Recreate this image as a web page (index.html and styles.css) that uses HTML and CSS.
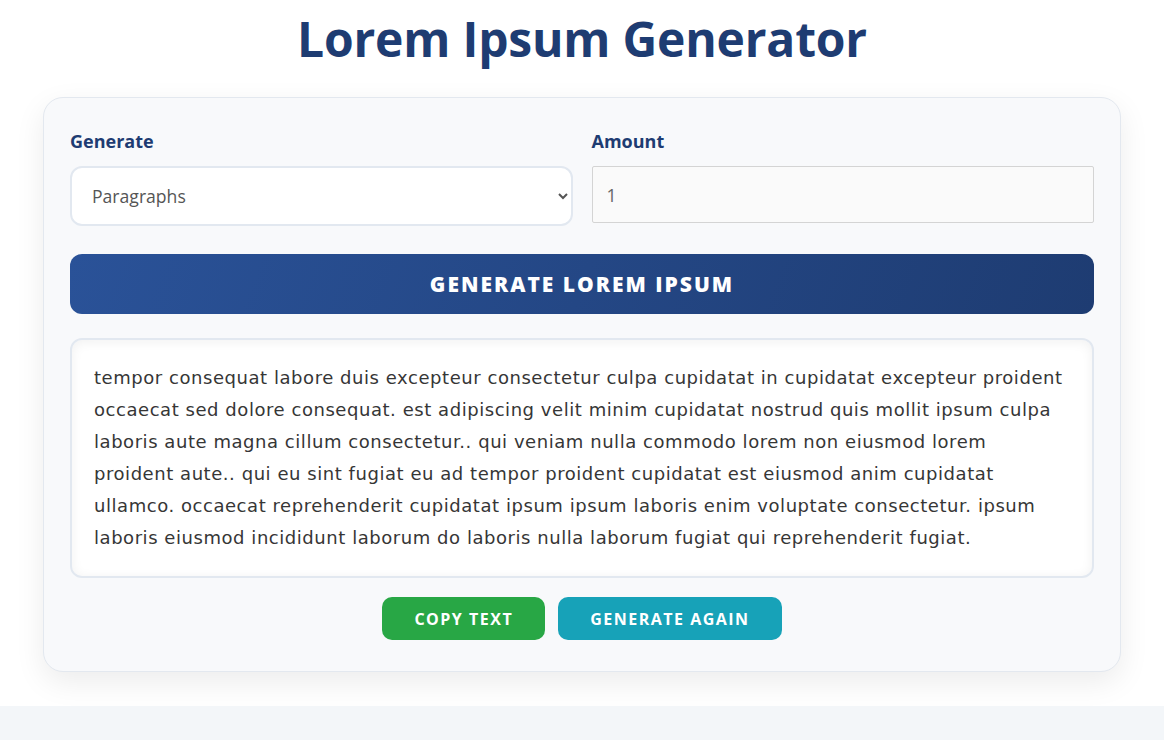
FILE: index.html
```html
<!DOCTYPE html>
<html lang="en">
<head>
<meta charset="utf-8">
<title>Lorem Ipsum Generator</title>
<link rel="stylesheet" href="styles.css">
</head>
<body>
<div class="page">
  <h1 class="title">Lorem Ipsum Generator</h1>
  <main class="card">
    <div class="fields">
      <div class="field">
        <label class="label" for="type">Generate</label>
        <select id="type" class="select">
          <option>Paragraphs</option>
          <option>Sentences</option>
          <option>Words</option>
        </select>
      </div>
      <div class="field">
        <label class="label" for="amount">Amount</label>
        <input id="amount" class="input" type="number" value="1">
      </div>
    </div>
    <button class="btn-main">Generate Lorem Ipsum</button>
    <div class="output">tempor consequat labore duis excepteur consectetur culpa cupidatat in cupidatat excepteur proident occaecat sed dolore consequat. est adipiscing velit minim cupidatat nostrud quis mollit ipsum culpa laboris aute magna cillum consectetur.. qui veniam nulla commodo lorem non eiusmod lorem proident aute.. qui eu sint fugiat eu ad tempor proident cupidatat est eiusmod anim cupidatat ullamco. occaecat reprehenderit cupidatat ipsum ipsum laboris enim voluptate consectetur. ipsum laboris eiusmod incididunt laborum do laboris nulla laborum fugiat qui reprehenderit fugiat.</div>
    <div class="actions">
      <button class="btn-small btn-copy">Copy Text</button>
      <button class="btn-small btn-again">Generate Again</button>
    </div>
  </main>
</div>
</body>
</html>
```

FILE: styles.css
```css
* { box-sizing: border-box; }

html, body {
  margin: 0;
  padding: 0;
}

body {
  background: #f3f6f9;
  font-family: "Open Sans", "Noto Sans", sans-serif;
  color: #333;
}

.page {
  background: #ffffff;
  padding: 10px 43px 34px;
}

.title {
  margin: 0 0 29px;
  text-align: center;
  font-size: 48px;
  line-height: 58px;
  font-weight: 700;
  color: #1e3c72;
  letter-spacing: -0.2px;
}

.card {
  background: #f8f9fb;
  border: 1px solid #e3e8ef;
  border-radius: 20px;
  padding: 29px 26px 31px;
  box-shadow: 0 10px 30px rgba(0, 0, 0, 0.08);
}

.fields {
  display: grid;
  grid-template-columns: 1fr 1fr;
  gap: 19px;
}

.field {
  display: flex;
  flex-direction: column;
}

.label {
  display: block;
  font-size: 18px;
  line-height: 28px;
  font-weight: 700;
  color: #1e3c72;
  margin-bottom: 11px;
}

.select {
  height: 60px;
  border: 2px solid #e2e8f0;
  border-radius: 12px;
  background: #fff;
  padding: 0 12px 0 16px;
  font-family: "Open Sans", sans-serif;
  font-size: 17.6px;
  color: #555;
}

.input {
  height: 57px;
  border: 1px solid #d4d4d4;
  border-radius: 2px;
  background: #fafafa;
  padding: 0 14px;
  font-family: "Open Sans", sans-serif;
  font-size: 17.6px;
  color: #666;
}

.btn-main {
  display: block;
  width: 100%;
  height: 60px;
  margin-top: 28px;
  border: none;
  border-radius: 12px;
  background: linear-gradient(110deg, #2a5298 0%, #1e3c72 100%);
  color: #fff;
  font-family: "Open Sans", sans-serif;
  font-size: 21px;
  font-weight: 800;
  letter-spacing: 2px;
  text-transform: uppercase;
}

.output {
  margin-top: 24px;
  border: 2px solid #e2e8f0;
  border-radius: 12px;
  background: #fff;
  box-shadow: inset 0 2px 12px rgba(0, 0, 0, 0.06);
  padding: 22px 26px 22px 22px;
  font-family: "DejaVu Sans", sans-serif;
  font-size: 18px;
  letter-spacing: 0.55px;
  line-height: 32px;
  color: #363636;
}

.actions {
  display: flex;
  justify-content: center;
  gap: 13px;
  margin-top: 19px;
}

.btn-small {
  height: 43px;
  border: none;
  border-radius: 10px;
  padding: 0 32px;
  color: #fff;
  font-family: "Open Sans", sans-serif;
  font-size: 16px;
  font-weight: 700;
  letter-spacing: 1.5px;
  text-transform: uppercase;
}

.btn-copy { background: #28a745; }
.btn-again { background: #17a2b8; }
```
